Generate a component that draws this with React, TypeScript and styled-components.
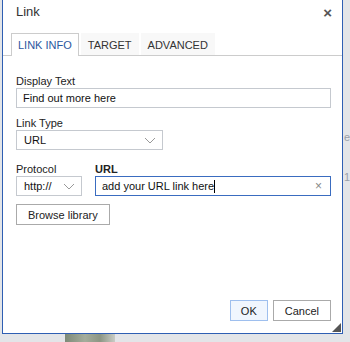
import * as React from 'react'
import styled, { createGlobalStyle } from 'styled-components'

const GlobalStyle = createGlobalStyle`
  html, body {
    margin: 0;
    padding: 0;
    background: #e3e5e8;
    font-family: "Liberation Sans", Arial, sans-serif;
    color: #222;
  }
`

const Page = styled.div`
  width: 350px;
  height: 342px;
  overflow: hidden;
  position: relative;
`

const Dialog = styled.div`
  box-sizing: border-box;
  margin-left: 2px;
  width: 341px;
  height: 334px;
  background: #fff;
  border: 1px solid #2f5fb3;
  border-top: none;
  display: flex;
  flex-direction: column;
  position: relative;
  z-index: 1;
`

const TitleBar = styled.div`
  height: 33px;
  box-sizing: border-box;
  display: flex;
  align-items: flex-start;
  justify-content: space-between;
  padding: 4px 10px 0 13px;
  font-size: 13px;
  line-height: 16px;
  color: #333;
`

const Close = styled.span`
  font-size: 15px;
  font-weight: bold;
  color: #555;
  line-height: 18px;
`

const TabStrip = styled.div`
  display: flex;
  gap: 2px;
  padding-left: 8px;
  border-bottom: 1px solid #ccc;
  height: 22px;
`

const Tab = styled.div<{ $active?: boolean }>`
  box-sizing: border-box;
  height: ${p => (p.$active ? '23px' : '22px')};
  padding: 0 6px;
  display: flex;
  align-items: center;
  font-size: 11px;
  color: ${p => (p.$active ? '#2b57a0' : '#333')};
  background: ${p => (p.$active ? '#fff' : '#f8f8f8')};
  border: 1px solid ${p => (p.$active ? '#ccc' : 'transparent')};
  border-bottom: none;
`

const Body = styled.div`
  flex: 1;
  padding: 18px 11px 0 13px;
  display: flex;
  flex-direction: column;
`

const Field = styled.div<{ $gap?: number }>`
  display: flex;
  flex-direction: column;
  margin-bottom: ${p => p.$gap ?? 8}px;
`

const Label = styled.div<{ $bold?: boolean }>`
  font-size: 11px;
  line-height: 14px;
  font-weight: ${p => (p.$bold ? 'bold' : 'normal')};
  color: #222;
`

const TextBox = styled.div<{ $focus?: boolean }>`
  box-sizing: border-box;
  height: 20px;
  border: 1px solid ${p => (p.$focus ? '#3a6cc0' : '#c5c9cf')};
  padding: 0 6px;
  display: flex;
  align-items: center;
  font-size: 11px;
  color: #111;
`

const Caret = styled.span`
  display: inline-block;
  width: 1px;
  height: 13px;
  background: #000;
`

const Clear = styled.span`
  margin-left: auto;
  margin-right: 2px;
  color: #888;
  font-size: 12px;
`

const SelectBox = styled.div<{ $width: number }>`
  box-sizing: border-box;
  width: ${p => p.$width}px;
  height: 20px;
  border: 1px solid #c5c9cf;
  padding: 0 6px 0 7px;
  display: flex;
  align-items: center;
  justify-content: space-between;
  font-size: 11px;
  color: #111;
`

const Row = styled.div`
  display: flex;
  gap: 13px;
`

const Grow = styled.div`
  flex: 1;
  display: flex;
  flex-direction: column;
`

const Button = styled.div<{ $primary?: boolean }>`
  box-sizing: border-box;
  height: 21px;
  padding: 0 ${p => (p.$primary ? 10 : 11)}px;
  display: inline-flex;
  align-items: center;
  font-size: 11px;
  color: #222;
  background: ${p => (p.$primary ? '#f0f6fe' : '#fff')};
  border: 1px solid ${p => (p.$primary ? '#9ebfee' : '#aaa')};
`

const Actions = styled.div`
  margin-top: auto;
  display: flex;
  justify-content: flex-end;
  gap: 5px;
  padding: 0 11px 12px 0;
`

const Grip = styled.div`
  position: absolute;
  right: 1px;
  bottom: 1px;
  width: 0;
  height: 0;
  border-left: 9px solid transparent;
  border-bottom: 9px solid #555;
`

const Photo = styled.div`
  position: absolute;
  left: 65px;
  top: 334px;
  width: 50px;
  height: 8px;
  background: linear-gradient(90deg, #7d8a78, #a4ad9c 40%, #8c9684 70%, #c9ccc5);
`

const BehindText = styled.span<{ $top: number }>`
  position: absolute;
  left: 344px;
  top: ${p => p.$top}px;
  font-size: 11px;
  color: #9aa0a8;
`

const Chevron = () => (
  <svg width="12" height="7" viewBox="0 0 12 7">
    <path d="M1 1 L6 6 L11 1" fill="none" stroke="#999" strokeWidth="1" />
  </svg>
)

export default function App() {
  return (
    <Page>
      <GlobalStyle />
      <BehindText $top={131}>e</BehindText>
      <BehindText $top={171}>1</BehindText>
      <Dialog>
        <TitleBar>
          <span>Link</span>
          <Close>×</Close>
        </TitleBar>
        <TabStrip>
          <Tab $active>LINK INFO</Tab>
          <Tab>TARGET</Tab>
          <Tab>ADVANCED</Tab>
        </TabStrip>
        <Body>
          <Field>
            <Label>Display Text</Label>
            <TextBox>Find out more here</TextBox>
          </Field>
          <Field $gap={12}>
            <Label>Link Type</Label>
            <SelectBox $width={147}>
              URL
              <Chevron />
            </SelectBox>
          </Field>
          <Row>
            <Field $gap={8}>
              <Label>Protocol</Label>
              <SelectBox $width={66}>
                http://
                <Chevron />
              </SelectBox>
            </Field>
            <Grow>
              <Label $bold>URL</Label>
              <TextBox $focus>
                add your URL link here
                <Caret />
                <Clear>×</Clear>
              </TextBox>
            </Grow>
          </Row>
          <div>
            <Button>Browse library</Button>
          </div>
        </Body>
        <Actions>
          <Button $primary>OK</Button>
          <Button>Cancel</Button>
        </Actions>
        <Grip />
      </Dialog>
      <Photo />
    </Page>
  )
}
